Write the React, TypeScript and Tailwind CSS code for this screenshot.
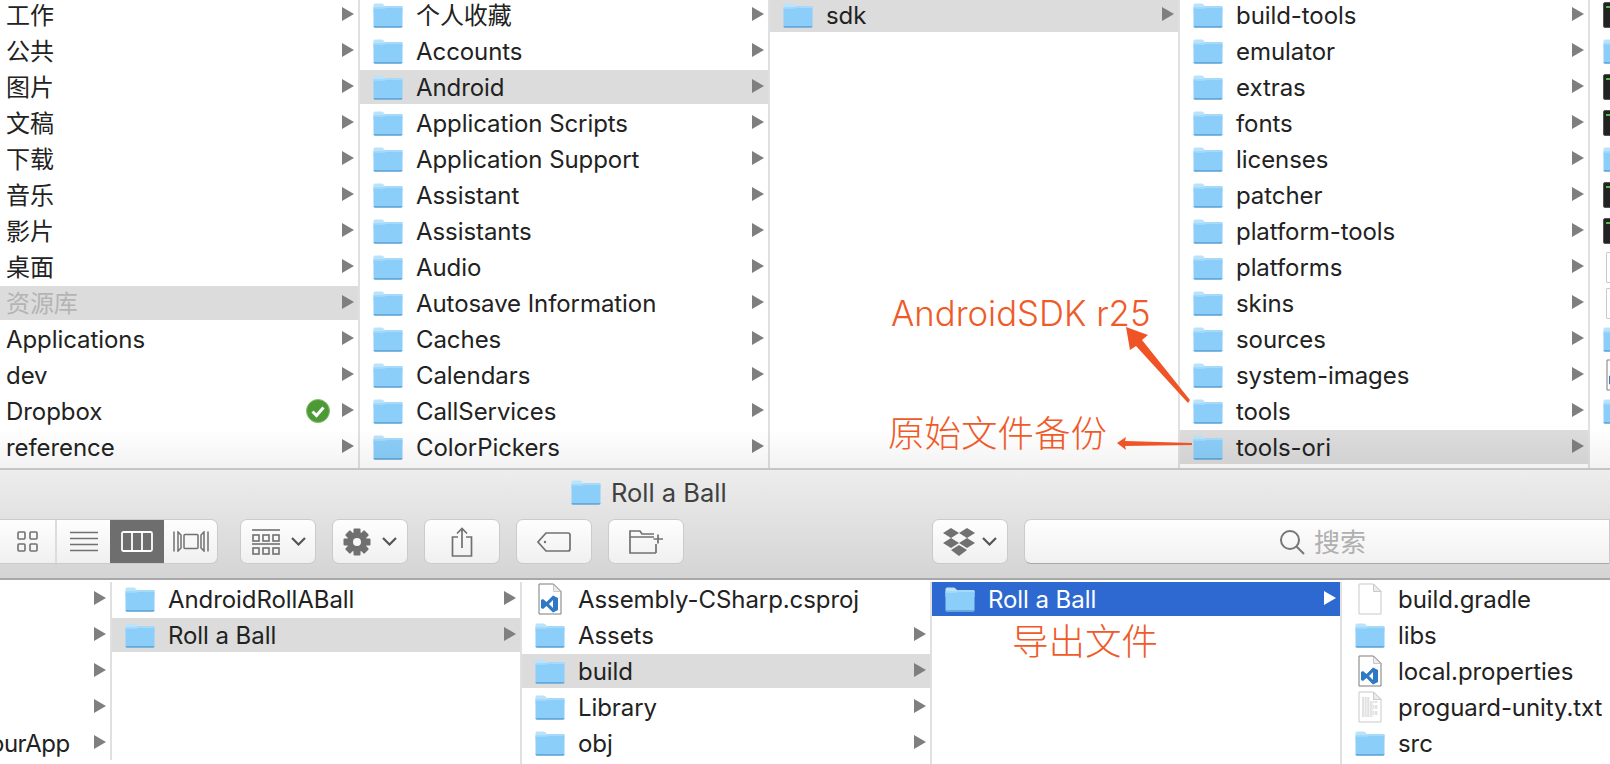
import type { ReactNode } from 'react';

const SANS = 'font-["Inter","Noto_Sans_CJK_SC",sans-serif]';

type Kind = 'folder' | 'doc' | 'code' | 'text' | 'exec' | 'blank' | 'none';

type Item = {
  label: string;
  icon?: Kind;
  arrow?: boolean;
  state?: 'hover' | 'selected' | 'muted';
  badge?: boolean;
};

function Folder({ className = '' }: { className?: string }) {
  return (
    <svg width="30" height="25" viewBox="0 0 30 25" className={`shrink-0 ${className}`}>
      <path d="M0.5 2 Q0.5 0.5 2 0.5 H9 Q10 0.5 11 2 L12 3 H28 Q29.5 3 29.5 4.5 V10 H0.5 Z" fill="#b9e2fb" />
      <path d="M0.5 4.5 H11.5 L13 3.6 H28.5 Q29.5 3.6 29.5 5 V23 Q29.5 24.5 28 24.5 H2 Q0.5 24.5 0.5 23 Z" fill="#8bcef9" />
      <path d="M0.5 4.5 H11.5 L13 3.6 H29.5 V5 H13 L11.5 5.8 H0.5 Z" fill="#a6daFA" />
      <path d="M0.5 23 H29.5 Q29.5 24.8 28 24.8 H2 Q0.5 24.8 0.5 23 Z" fill="#68a9d8" />
    </svg>
  );
}

function Sheet({ children }: { children?: ReactNode }) {
  return (
    <svg width="24" height="32" viewBox="0 0 24 32" className="shrink-0">
      <path d="M1 1 H15.5 L23 8.5 V31 H1 Z" fill="#fff" stroke="#c9c9c9" />
      <path d="M15.5 1 V8.5 H23 Z" fill="#ececec" stroke="#c9c9c9" />
      {children}
    </svg>
  );
}

function FileIcon({ kind }: { kind: Kind }) {
  if (kind === 'folder') return <Folder />;
  if (kind === 'none') return <span className="w-[30px] shrink-0" />;
  if (kind === 'exec') {
    return (
      <span className="w-[30px] h-[26px] shrink-0 bg-[#222] border border-[#555] rounded-[2px] pl-[2px] pt-[3px]">
        <span className="block w-[4px] h-[2px] bg-[#4fbf4f]" />
      </span>
    );
  }
  if (kind === 'blank') {
    return (
      <span className="w-[30px] shrink-0 flex justify-center">
        <span className="w-[24px] h-[31px] bg-white border border-[#c9c9c9] rounded-[1px]" />
      </span>
    );
  }
  if (kind === 'code') {
    return (
      <span className="w-[30px] shrink-0 flex justify-center">
        <Sheet>
          <path d="M1 1 H15.5 L23 8.5 V31 H1 Z" fill="none" stroke="#777" strokeWidth="0.7" />
          <path d="M15 12.5 L20 15 V27 L15 29.5 L8.5 23 L5 26 L3 25 V17 L5 16 L8.5 19 Z M15 17 L11 21 L15 25 Z" fill="#2f78c4" fillRule="evenodd" />
        </Sheet>
      </span>
    );
  }
  if (kind === 'text') {
    return (
      <span className="w-[30px] shrink-0 flex justify-center">
        <Sheet>
          {[7, 9, 11, 13, 15, 17, 19, 21, 23, 25].map((y, i) => (
            <line key={y} x1="4" y1={y} x2={i < 2 ? 12 : i % 3 === 0 ? 15 : 20} y2={y} stroke="#b5b5b5" strokeWidth="0.8" strokeDasharray="2 0.6" />
          ))}
        </Sheet>
      </span>
    );
  }
  return (
    <span className="w-[30px] shrink-0 flex justify-center">
      <Sheet />
    </span>
  );
}

function Caret({ white }: { white?: boolean }) {
  return (
    <svg width="12" height="14" viewBox="0 0 12 14" className="absolute right-[4px] top-[9px]">
      <path d="M0 0 L12 7 L0 14 Z" fill={white ? '#fff' : '#7f7f7f'} />
    </svg>
  );
}

function SyncBadge() {
  return (
    <svg width="24" height="24" viewBox="0 0 24 24" className="absolute right-[28px] top-[5px]">
      <circle cx="12" cy="12" r="11.5" fill="#4b9a34" />
      <circle cx="12" cy="12" r="11.5" fill="none" stroke="#86bf70" strokeWidth="1" />
      <path d="M6.5 12.5 L10.5 16.5 L17.5 8.5" fill="none" stroke="#fff" strokeWidth="3" />
    </svg>
  );
}

function Row({ item }: { item: Item }) {
  const bg =
    item.state === 'selected'
      ? 'bg-[#2d69d0] text-white'
      : item.state === 'hover' || item.state === 'muted'
        ? 'bg-[#dcdcdc]'
        : '';
  const color = item.state === 'muted' ? 'text-[#b4b4b4]' : item.state === 'selected' ? 'text-white' : 'text-[#222]';
  return (
    <div className={`relative h-[34px] shrink-0 flex items-center whitespace-nowrap ${bg}`}>
      {item.icon ? (
        <span className="ml-[13px] mr-[13px] flex items-center">
          <FileIcon kind={item.icon} />
        </span>
      ) : (
        <span className="w-[6px] shrink-0" />
      )}
      <span className={`pt-[2px] text-[24px] leading-[34px] tracking-[-0.07px] ${color}`}>{item.label}</span>
      {item.badge && <SyncBadge />}
      {item.arrow && <Caret white={item.state === 'selected'} />}
    </div>
  );
}

function Column({ width, items, border = true, top }: { width: string; items: Item[]; border?: boolean; top: string }) {
  return (
    <div className={`${width} shrink-0 flex flex-col gap-[2px] overflow-hidden ${top} ${border ? 'border-r-2 border-[#e0e0e0]' : ''}`}>
      {items.map((item, i) => (
        <Row key={i} item={item} />
      ))}
    </div>
  );
}

const folders = (labels: string[]): Item[] => labels.map((label) => ({ label, icon: 'folder', arrow: true }));

const places: Item[] = [
  { label: '工作', arrow: true },
  { label: '公共', arrow: true },
  { label: '图片', arrow: true },
  { label: '文稿', arrow: true },
  { label: '下载', arrow: true },
  { label: '音乐', arrow: true },
  { label: '影片', arrow: true },
  { label: '桌面', arrow: true },
  { label: '资源库', arrow: true, state: 'muted' },
  { label: 'Applications', arrow: true },
  { label: 'dev', arrow: true },
  { label: 'Dropbox', arrow: true, badge: true },
  { label: 'reference', arrow: true },
];

const library = folders([
  '个人收藏', 'Accounts', 'Android', 'Application Scripts', 'Application Support', 'Assistant', 'Assistants',
  'Audio', 'Autosave Information', 'Caches', 'Calendars', 'CallServices', 'ColorPickers',
]);
library[2].state = 'hover';

const sdkRoot: Item[] = [{ label: 'sdk', icon: 'folder', arrow: true, state: 'hover' }];

const sdk = folders([
  'build-tools', 'emulator', 'extras', 'fonts', 'licenses', 'patcher', 'platform-tools', 'platforms', 'skins',
  'sources', 'system-images', 'tools', 'tools-ori',
]);
sdk[12].state = 'hover';

const tail: Kind[] = ['exec', 'folder', 'exec', 'exec', 'folder', 'exec', 'exec', 'blank', 'blank', 'folder', 'code', 'folder'];

const leftStub: Item[] = [
  { label: '', arrow: true },
  { label: '', arrow: true },
  { label: '', arrow: true },
  { label: '', arrow: true },
  { label: '', arrow: true },
];

const projects: Item[] = [
  { label: 'AndroidRollABall', icon: 'folder', arrow: true },
  { label: 'Roll a Ball', icon: 'folder', arrow: true, state: 'hover' },
];

const unity: Item[] = [
  { label: 'Assembly-CSharp.csproj', icon: 'code' },
  { label: 'Assets', icon: 'folder', arrow: true },
  { label: 'build', icon: 'folder', arrow: true, state: 'hover' },
  { label: 'Library', icon: 'folder', arrow: true },
  { label: 'obj', icon: 'folder', arrow: true },
];

const output: Item[] = [{ label: 'Roll a Ball', icon: 'folder', arrow: true, state: 'selected' }];

const gradle: Item[] = [
  { label: 'build.gradle', icon: 'doc' },
  { label: 'libs', icon: 'folder' },
  { label: 'local.properties', icon: 'code' },
  { label: 'proguard-unity.txt', icon: 'text' },
  { label: 'src', icon: 'folder' },
];

function Chevron() {
  return (
    <svg width="15" height="9" viewBox="0 0 15 9" className="shrink-0">
      <path d="M1 1 L7.5 7.5 L14 1" fill="none" stroke="#555" strokeWidth="2.2" />
    </svg>
  );
}

function ToolButton({ children, width = 'w-[76px]', className = '' }: { children: ReactNode; width?: string; className?: string }) {
  return (
    <div
      className={`${width} h-[45px] shrink-0 flex items-center justify-center rounded-[7px] border border-[#cbcbcb] bg-gradient-to-b from-[#fefefe] to-[#f0f0f0] ${className}`}
    >
      {children}
    </div>
  );
}

function Gear() {
  const teeth = [0, 45, 90, 135, 180, 225, 270, 315];
  return (
    <svg width="28" height="28" viewBox="0 0 28 28">
      {teeth.map((a) => (
        <rect key={a} x="10.5" y="0.5" width="7" height="7" rx="1" fill="#6f6f6f" transform={`rotate(${a} 14 14)`} />
      ))}
      <circle cx="14" cy="14" r="10" fill="#6f6f6f" />
      <circle cx="14" cy="14" r="4" fill="#f8f8f8" />
    </svg>
  );
}

function ViewSwitcher() {
  return (
    <div className="w-[218px] h-[45px] shrink-0 flex rounded-r-[7px] border-y border-r border-[#cbcbcb] bg-gradient-to-b from-[#fefefe] to-[#f0f0f0] overflow-hidden">
      <div className="w-[57px] flex items-center justify-center border-r-2 border-[#dcdcdc]">
        <svg width="21" height="21" viewBox="0 0 21 21" fill="none" stroke="#717171" strokeWidth="1.6">
          <rect x="1" y="1" width="7" height="7" rx="1" />
          <rect x="13" y="1" width="7" height="7" rx="1" />
          <rect x="1" y="13" width="7" height="7" rx="1" />
          <rect x="13" y="13" width="7" height="7" rx="1" />
        </svg>
      </div>
      <div className="w-[53px] flex items-center justify-center">
        <svg width="28" height="21" viewBox="0 0 28 21" stroke="#717171" strokeWidth="1.6">
          <line x1="0" y1="1.5" x2="28" y2="1.5" />
          <line x1="0" y1="7.5" x2="28" y2="7.5" />
          <line x1="0" y1="13.5" x2="28" y2="13.5" />
          <line x1="0" y1="19.5" x2="28" y2="19.5" />
        </svg>
      </div>
      <div className="w-[54px] -my-px flex items-center justify-center bg-[#6e6e6e]">
        <svg width="32" height="21" viewBox="0 0 32 21" fill="none" stroke="#fff" strokeWidth="1.8">
          <rect x="1" y="1" width="30" height="19" rx="1.5" />
          <line x1="11" y1="1" x2="11" y2="20" />
          <line x1="21" y1="1" x2="21" y2="20" />
        </svg>
      </div>
      <div className="flex-1 flex items-center justify-center">
        <svg width="36" height="21" viewBox="0 0 36 21" fill="none" stroke="#717171" strokeWidth="1.5">
          <rect x="11" y="3.5" width="14" height="14" rx="1" />
          <line x1="1" y1="0.5" x2="1" y2="20.5" />
          <line x1="35" y1="0.5" x2="35" y2="20.5" />
          <path d="M5 1 L8 4 V17 L5 20 Z" />
          <path d="M31 1 L28 4 V17 L31 20 Z" />
        </svg>
      </div>
    </div>
  );
}

function Toolbar() {
  return (
    <div className="h-[110px] shrink-0 flex flex-col border-b-2 border-[#a8a8a8] bg-gradient-to-b from-[#ededed] to-[#d4d4d4]">
      <div className="h-[49px] shrink-0 flex items-center pl-[571px] pb-[4px]">
        <Folder />
        <span className="ml-[10px] text-[25.5px] leading-none text-[#404040]">Roll a Ball</span>
      </div>
      <div className="flex items-start">
        <ViewSwitcher />
        <ToolButton className="ml-[22px] gap-[11px] pl-[1px]">
          <svg width="28" height="26" viewBox="0 0 28 26" fill="none" stroke="#717171" strokeWidth="1.6">
            <line x1="0" y1="1" x2="28" y2="1" />
            <rect x="1" y="6" width="6" height="6" />
            <rect x="11" y="6" width="6" height="6" />
            <rect x="21" y="6" width="6" height="6" />
            <line x1="0" y1="15" x2="28" y2="15" />
            <rect x="1" y="19" width="6" height="6" />
            <rect x="11" y="19" width="6" height="6" />
            <rect x="21" y="19" width="6" height="6" />
          </svg>
          <Chevron />
        </ToolButton>
        <ToolButton className="ml-[16px] gap-[11px]">
          <Gear />
          <Chevron />
        </ToolButton>
        <ToolButton className="ml-[16px]">
          <svg width="22" height="30" viewBox="0 0 22 30" fill="none" stroke="#717171" strokeWidth="1.7">
            <path d="M7 10 H1.5 V29 H20.5 V10 H15" />
            <path d="M11 21 V1.5 M6 6.5 L11 1.5 L16 6.5" />
          </svg>
        </ToolButton>
        <ToolButton className="ml-[16px]">
          <svg width="34" height="20" viewBox="0 0 34 20" fill="none" stroke="#717171" strokeWidth="1.7">
            <path d="M9 1 H31 Q33 1 33 3 V17 Q33 19 31 19 H9 L1 10 Z" />
            <circle cx="8" cy="10" r="1.2" fill="#717171" stroke="none" />
          </svg>
        </ToolButton>
        <ToolButton className="ml-[16px]">
          <svg width="34" height="24" viewBox="0 0 34 24" fill="none" stroke="#717171" strokeWidth="1.7">
            <path d="M27 23 H1 V1 H11 L13 4 H25 M1 7 H25 M27 14 V23" />
            <path d="M29 4.5 V13.5 M24.5 9 H34" />
          </svg>
        </ToolButton>
        <ToolButton className="ml-[248px] gap-[7px]">
          <svg width="32" height="28" viewBox="0 0 32 28" fill="#717171">
            <path d="M8 0 L16 5 L8 10 L0 5 Z M24 0 L32 5 L24 10 L16 5 Z M8 10 L16 15 L8 20 L0 15 Z M24 10 L32 15 L24 20 L16 15 Z M16 17 L24 22 L16 28 L8 22 Z" />
          </svg>
          <Chevron />
        </ToolButton>
        <div className="ml-[16px] flex-1 h-[45px] flex items-center border border-[#cbcbcb] border-b-[#a9a9a9] rounded-l-[7px] bg-gradient-to-b from-[#fefefe] to-[#f1f1f1] pl-[254px]">
          <svg width="26" height="26" viewBox="0 0 26 26" fill="none" stroke="#767676" strokeWidth="2">
            <circle cx="11" cy="11" r="9" />
            <line x1="17.5" y1="17.5" x2="25" y2="25" />
          </svg>
          <span className="ml-[9px] pt-[2px] text-[26px] leading-none text-[#b0b0b0]">搜索</span>
        </div>
      </div>
    </div>
  );
}

export default function App() {
  return (
    <div className={`relative w-[1610px] h-[764px] overflow-hidden bg-white ${SANS}`}>
      <div className="relative h-[470px] flex overflow-hidden border-b-2 border-[#c4c4c4]">
        <Column width="w-[360px]" top="-mt-[2px]" items={places} />
        <Column width="w-[410px]" top="-mt-[2px]" items={library} />
        <Column width="w-[410px]" top="-mt-[2px]" items={sdkRoot} />
        <Column width="w-[410px]" top="-mt-[2px]" items={sdk} />
        <div className="flex-1 -mt-[2px] flex flex-col gap-[2px] overflow-hidden pl-[13px]">
          {tail.map((kind, i) => (
            <div key={i} className="h-[34px] shrink-0 flex items-center">
              <FileIcon kind={kind} />
            </div>
          ))}
        </div>
        <div className="absolute left-0 right-0 bottom-0 h-[40px] bg-gradient-to-b from-transparent to-black/5" />
      </div>
      <Toolbar />
      <div className="flex pt-[2px] h-[184px]">
        <div className="w-[112px] shrink-0 relative">
          <Column width="w-[112px]" top="" items={leftStub} />
          <span className="absolute left-[-10px] top-[145px] text-[24px] leading-[34px] tracking-[-0.5px] text-[#222]">ourApp</span>
        </div>
        <Column width="w-[410px]" top="" items={projects} />
        <Column width="w-[410px]" top="" items={unity} />
        <Column width="w-[410px]" top="" items={output} />
        <Column width="w-[268px]" top="" border={false} items={gradle} />
      </div>

      {/* annotations drawn on top of the screenshot */}
      <span className="absolute left-[891px] top-[292px] text-[34.7px] leading-[42px] font-light text-[#f05a28] whitespace-nowrap">
        AndroidSDK r25
      </span>
      <span className="absolute left-[888px] top-[412px] text-[36.5px] leading-[44px] font-light text-[#f05a28] whitespace-nowrap">
        原始文件备份
      </span>
      <span className="absolute left-[1012px] top-[620px] text-[36.5px] leading-[44px] font-light text-[#f05a28] whitespace-nowrap">
        导出文件
      </span>
      <svg className="absolute left-0 top-0 pointer-events-none" width="1610" height="764">
        <path d="M1126 327 L1148 335 L1142 340 L1190 400 L1188 403 L1136 346 L1130 350 Z" fill="#f05426" />
        <path d="M1117 443 L1126 437 L1125 441 L1192 443 L1192 445 L1125 446 L1126 450 Z" fill="#f05426" />
      </svg>
    </div>
  );
}
